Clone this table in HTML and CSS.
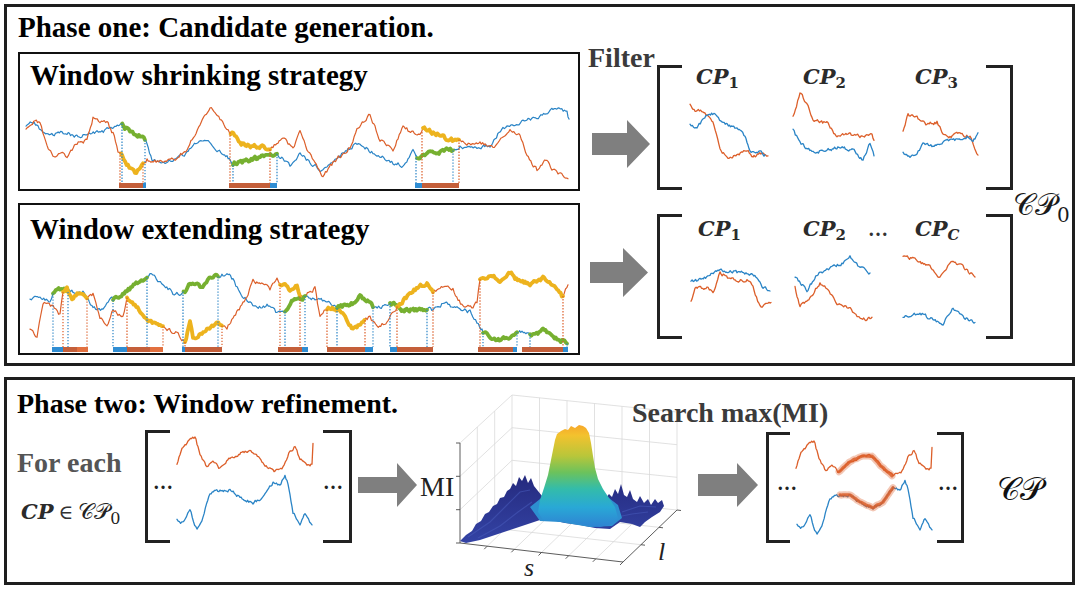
FILE: index.html
```html
<!DOCTYPE html>
<html lang="en">
<head>
<meta charset="utf-8">
<title>Candidate generation and window refinement</title>
<link rel="stylesheet" href="styles.css">
</head>
<body>
<div class="page">
  <section class="phase one">
    <div class="left-col">
      <h1 class="title">Phase one: Candidate generation.</h1>
      <div class="strat shrink">
        <h2 class="strat-title">Window shrinking strategy</h2>
        <svg id="shrink" class="chart" viewBox="20 95 558 94" width="558" height="94"></svg>
      </div>
      <div class="strat extend">
        <h2 class="strat-title">Window extending strategy</h2>
        <svg id="extend" class="chart" viewBox="20 248 558 105" width="558" height="105"></svg>
      </div>
    </div>
    <div class="arrow-col">
      <div class="filter">Filter</div>
      <svg class="arrow a1" viewBox="0 0 58 48" width="58" height="48"><path d="M0 13H35V0L58 24L35 48V35H0Z"/></svg>
      <svg class="arrow a2" viewBox="0 0 58 49" width="58" height="49"><path d="M0 14H33V0L58 24.5L33 49V35H0Z"/></svg>
    </div>
    <div class="bracket-col">
      <div class="bracket b1">
        <div class="bl"></div>
        <div class="bc">
          <div class="cp-row">
            <span class="cp k1">CP<sub>1</sub></span>
            <span class="cp k2">CP<sub>2</sub></span>
            <span class="cp k3">CP<sub>3</sub></span>
          </div>
          <svg id="mini1" class="chart" viewBox="682 89 304 96" width="304" height="96"></svg>
        </div>
        <div class="br"></div>
      </div>
      <div class="bracket b2">
        <div class="bl"></div>
        <div class="bc">
          <div class="cp-row">
            <span class="cp k1">CP<sub>1</sub></span>
            <span class="cp k2">CP<sub>2</sub></span>
            <span class="mid-dots">&hellip;</span>
            <span class="cp k3">CP<sub class="it">C</sub></span>
          </div>
          <svg id="mini2" class="chart" viewBox="682 241 304 95" width="304" height="95"></svg>
        </div>
        <div class="br"></div>
      </div>
    </div>
    <div class="cp0-col">
      <div class="cp0 scr">&#x1D49E;&#x1D4AB;<sub>0</sub></div>
    </div>
  </section>

  <section class="phase two">
    <h1 class="title t2">Phase two: Window refinement.</h1>
    <svg class="plot" viewBox="455 380 235 202" width="235" height="202">
      <defs>
        <linearGradient id="pk" gradientUnits="userSpaceOnUse" x1="0" y1="425" x2="0" y2="528">
          <stop offset="0" stop-color="#f7a72a"/>
          <stop offset="0.1" stop-color="#f3c22e"/>
          <stop offset="0.3" stop-color="#b9c63a"/>
          <stop offset="0.46" stop-color="#6cc25c"/>
          <stop offset="0.62" stop-color="#33bcaa"/>
          <stop offset="0.8" stop-color="#29a8d6"/>
          <stop offset="1" stop-color="#2f80d2"/>
        </linearGradient>
        <linearGradient id="bs" gradientUnits="userSpaceOnUse" x1="0" y1="475" x2="0" y2="545">
          <stop offset="0" stop-color="#252a7e"/>
          <stop offset="1" stop-color="#3444a6"/>
        </linearGradient>
      </defs>
      <g class="grid">
        <path d="M512 395V493M539.5 397.8V495.8M567 400.7V498.7M594.5 403.5V501.5M622 406.3V504.3M649.5 409.2V507.2M677 412V510"/>
        <path d="M512 395L677 412M512 427.7L677 444.7M512 460.3L677 477.3M512 493L677 510"/>
        <path d="M460 443L512 395M460 476.3L512 427.7M460 509.7L512 460.3M477.3 427V526.3M494.7 411V509.7"/>
        <path d="M477.3 526.3L641 544.7M494.7 509.7L659 527.3M487.2 546.2L539.5 495.8M514.3 549.3L567 498.7M541.5 552.5L594.5 501.5M568.7 555.7L622 504.3M595.8 558.8L649.5 507.2M460 543L512 493"/>
      </g>
      <g class="axes">
        <path d="M460 443V543L623 562L677 510"/>
        <path d="M460 443H456M460 476.3H456M460 509.7H456M460 543H456"/>
        <path d="M487.2 546.2l-3 3M514.3 549.3l-3 3M541.5 552.5l-3 3M568.7 555.7l-3 3M595.8 558.8l-3 3M623 562l-3 3"/>
        <path d="M641 544.7l4 .5M659 527.3l4 .5M677 510l4 .5"/>
      </g>
      <polygon fill="url(#bs)" points="460,541 466,535 472,531 476,524 481,521 485,514 489,512 493,506 497,504 500,498 504,497 507,491 510,489 513,483 516,486 519,477 522,481 525,475 528,483 531,478 534,486 538,491 542,496 560,499 590,497 605,499 609,494 612,497 615,489 618,494 621,484 624,495 627,497 630,490 633,499 637,502 640,496 644,503 648,499 651,505 655,499 658,503 662,500 664,506 660,512 652,517 645,522 640,527 632,524 620,522 610,529 595,528 580,525 565,523 552,520 540,520 525,525 510,530 495,535 480,540 466,543"/>
      <g class="streak">
        <path d="M468 537L490 522L506 506L520 492L530 490"/>
        <path d="M478 538L500 526L518 512L532 502"/>
        <path d="M622 512L640 506L656 507"/>
        <path d="M612 518L632 514L648 512"/>
      </g>
      <polygon fill="#2d8fd0" points="530,507 545,495 560,500 590,497 605,495 618,505 622,518 612,526 590,527 560,522 540,521"/>
      <polygon fill="url(#pk)" points="555,440 557,434 561,431 565,429 568,430 571,426 575,428 579,425 583,426 586,428 589,433 591,443 593,456 595,468 598,479 603,489 609,498 615,507 618,518 612,524 600,527 585,525 570,522 555,521 543,520 538,512 540,500 544,488 548,475 551,460 553,450"/>
      <text class="ax-lab" x="524" y="576">s</text>
      <text class="ax-lab" x="658" y="560">l</text>
    </svg>
    <div class="search">Search max(MI)</div>

    <div class="for">
      <div class="for-each">For each</div>
      <div class="cp-in"><span class="cpb">CP</span> <span class="in">&#8712;</span> <span class="scr">&#x1D49E;&#x1D4AB;<sub>0</sub></span></div>
    </div>
    <div class="bracket pb1">
      <div class="bl"><span class="dots">&hellip;</span></div>
      <svg id="p2a" class="chart" viewBox="170 430 153 113" width="153" height="113"></svg>
      <div class="br"><span class="dots">&hellip;</span></div>
    </div>
    <svg class="arrow a3" viewBox="0 0 59 44" width="59" height="44"><path d="M0 14H39V0L59 22L39 44V30H0Z"/></svg>
    <div class="mi">MI</div>
    <svg class="arrow a4" viewBox="0 0 60 44" width="60" height="44"><path d="M0 11H39V0L60 22L39 44V33H0Z"/></svg>
    <div class="bracket pb2">
      <div class="bl"><span class="dots">&hellip;</span></div>
      <svg id="p2b" class="chart" viewBox="790 432 147 111" width="147" height="111"></svg>
      <div class="br"><span class="dots">&hellip;</span></div>
    </div>
    <div class="cpf scr">&#x1D49E;&#x1D4AB;</div>
  </section>
</div>
<script src="script.js"></script>
</body>
</html>
```

FILE: styles.css
```css
* { box-sizing: border-box; margin: 0; padding: 0; }
html, body { background: #fff; }
body {
  width: 1080px;
  height: 591px;
  overflow: hidden;
  font-family: "Liberation Serif", "Times New Roman", serif;
  color: #000;
}
.page { padding: 4px 5px 0 4px; }
.phase { border: 3px solid #1e1e1e; background: #fff; }

/* ---------- phase one ---------- */
.one { height: 362px; display: flex; }
.left-col { width: 573px; padding-left: 11px; flex: none; }
.title { font-size: 28px; font-weight: bold; line-height: 32px; white-space: nowrap; }
.one .title { margin-top: 4px; font-size: 29px; }
.strat { width: 562px; border: 2px solid #111; }
.shrink { margin-top: 9px; }
.extend { margin-top: 12px; }
.strat-title { font-size: 29px; font-weight: bold; line-height: 32px; padding-left: 10px; white-space: nowrap; }
.shrink .strat-title { padding-top: 5px; }
.extend .strat-title { padding-top: 7.5px; }
.chart { display: block; overflow: visible; }
.shrink .chart { margin-top: 4px; }
.extend .chart { margin-top: 3.5px; }

.arrow-col { width: 77px; flex: none; }
.filter { font-size: 28px; font-weight: bold; line-height: 32px; color: #3b3b3b; margin-top: 34.5px; padding-left: 8px; }
.arrow { display: block; fill: #7f7f7f; }
.a1 { margin: 46.5px 0 0 12px; }
.a2 { margin: 80px 0 0 10px; }

.bracket-col { width: 356px; flex: none; }
.bracket { display: flex; }
.bl, .br { border: 3px solid #222; flex: none; display: flex; align-items: center; }
.bl { border-right: none; }
.br { border-left: none; }
.b1 { margin-top: 58px; height: 125px; }
.b2 { margin-top: 24px; height: 125px; }
.b1 .bl, .b2 .bl { width: 25px; }
.b1 .br, .b2 .br { width: 27px; }
.bc { width: 304px; }
.cp-row {
  display: flex;
  height: 24px;
  line-height: 24px;
  font-family: "DejaVu Serif", serif;
  font-size: 21px;
  font-weight: bold;
  font-style: italic;
  color: #2b2b2b;
  white-space: nowrap;
}
.b2 .cp-row { margin-top: 3px; }
.cp sub { font-size: 15px; line-height: 0; vertical-align: -4px; font-style: normal; }
.cp sub.it { font-style: italic; }
.k1 { margin-left: 14px; width: 107px; }
.k2 { width: 112px; }
.b2 .k1 { margin-left: 16px; width: 105px; }
.b2 .k2 { width: 65px; }
.mid-dots { width: 47px; font-family: "Liberation Serif", serif; font-style: normal; font-size: 20px; color: #333; }
.cp0-col { flex: 1; }
.scr { font-family: "DejaVu Serif", "DejaVu Sans", "Noto Sans", serif; font-weight: normal; font-style: normal; }
.cp0 { margin-top: 182.6px; font-size: 30px; line-height: 30px; white-space: nowrap; color: #1a1a1a; }
.cp0 sub { font-size: 20px; vertical-align: -7px; line-height: 0; }

/* ---------- phase two ---------- */
.two {
  height: 208px;
  margin-top: 11px;
  padding-left: 10px;
  display: grid;
  grid-template-columns: 128px 207px 66px 37px 235px 72px 204px 1fr;
  grid-template-rows: 50px 152px;
  align-items: start;
}
.t2 { grid-row: 1; grid-column: 1 / 5; margin-top: 8px; }
.plot { grid-row: 1 / 3; grid-column: 5; display: block; }
.plot .grid path { fill: none; stroke: #d9d9d9; stroke-width: 0.8; }
.plot .axes path { fill: none; stroke: #4a4a4a; stroke-width: 0.9; }
.plot .streak path { fill: none; stroke: #4658b8; stroke-width: 1.2; stroke-opacity: 0.6; }
.ax-lab { font-family: "Liberation Serif", serif; font-style: italic; font-size: 26px; fill: #222; }
.search {
  grid-row: 1;
  grid-column: 5 / 8;
  position: relative;
  margin-top: 16.5px;
  padding-left: 177px;
  font-size: 28px;
  font-weight: bold;
  line-height: 32px;
  color: #3b3b3b;
  white-space: nowrap;
}
.for { grid-row: 2; grid-column: 1; }
.for-each { font-size: 28px; font-weight: bold; line-height: 32px; color: #555; margin-top: 16.5px; white-space: nowrap; }
.cp-in { margin-top: 17px; padding-left: 4px; font-size: 20px; line-height: 32px; white-space: nowrap; color: #333; }
.cpb { font-family: "DejaVu Serif", serif; font-weight: bold; font-style: italic; font-size: 21px; color: #2b2b2b; }
.in { font-family: "DejaVu Serif", serif; font-size: 20px; }
.cp-in .scr { font-size: 22px; color: #222; }
.cp-in sub { font-size: 16px; vertical-align: -5px; line-height: 0; }

.pb1 { grid-row: 2; grid-column: 2; height: 113px; }
.pb1 .bl { width: 25px; padding-left: 5px; }
.pb1 .br { width: 29px; }
.pb2 { grid-row: 2; grid-column: 7; margin: 2px 0 0 4px; height: 111px; }
.pb2 .bl { width: 24px; padding-left: 8px; }
.pb2 .br { width: 27px; padding-left: 1px; }
.dots { font-family: "Liberation Serif", serif; font-weight: bold; font-size: 20px; line-height: 1; margin-top: -10px; color: #222; }
.a3 { grid-row: 2; grid-column: 3; margin: 33px 0 0 6px; }
.mi { grid-row: 2; grid-column: 4; margin: 43px 0 0 2px; font-size: 28px; line-height: 28px; color: #222; }
.a4 { grid-row: 2; grid-column: 6; margin: 33px 0 0 8px; }
.cpf { grid-row: 2; grid-column: 8; padding-left: 31px; margin-top: 43px; font-size: 32px; line-height: 32px; color: #111; white-space: nowrap; }
```

FILE: script.js
```js
(function () {
  var NS = 'http://www.w3.org/2000/svg';
  var COL = { b: '#2a84c6', o: '#dc5f2a', g: '#76b030', y: '#edb31e', B: '#2f8dd3', O: '#c45f3a', O2: '#e2703f' };

  function rng(seed) {
    var s = seed >>> 0;
    return function () { s = (Math.imul(s, 1664525) + 1013904223) >>> 0; return s / 4294967296; };
  }
  function walk(a, seed, amp, step) {
    var r = rng(seed), pts = [], n = 0;
    amp = amp || 3.4; step = step || 1.3;
    for (var i = 0; i < a.length - 1; i++) {
      var x0 = a[i][0], y0 = a[i][1], x1 = a[i + 1][0], y1 = a[i + 1][1];
      var k = Math.max(1, Math.round((x1 - x0) / step));
      for (var j = i ? 1 : 0; j <= k; j++) {
        var t = j / k;
        n = 0.5 * n + (r() - 0.5) * amp;
        pts.push([x0 + (x1 - x0) * t, y0 + (y1 - y0) * t + n]);
      }
    }
    return pts;
  }
  function pathD(p) {
    return p.map(function (q, i) { return (i ? 'L' : 'M') + q[0].toFixed(1) + ' ' + q[1].toFixed(1); }).join('');
  }
  function seg(p, a, b) { return p.filter(function (q) { return q[0] >= a - 0.01 && q[0] <= b + 0.01; }); }
  function yAt(p, x) {
    var best = p[0];
    p.forEach(function (q) { if (Math.abs(q[0] - x) < Math.abs(best[0] - x)) best = q; });
    return best[1];
  }
  function el(svg, tag, at) {
    var e = document.createElementNS(NS, tag);
    for (var k in at) e.setAttribute(k, at[k]);
    svg.appendChild(e);
    return e;
  }
  function line(svg, p, color, w, extra) {
    var at = { d: pathD(p), fill: 'none', stroke: color, 'stroke-width': w, 'stroke-linejoin': 'round', 'stroke-linecap': 'round' };
    if (extra) for (var k in extra) at[k] = extra[k];
    return el(svg, 'path', at);
  }

  function big(id, series, hls, bars, barY, barH) {
    var svg = document.getElementById(id), S = {};
    ['b', 'o'].forEach(function (k) { S[k] = walk(series[k][0], series[k][1], 3.6); });
    line(svg, S.b, COL.b, 1.2);
    line(svg, S.o, COL.o, 1.2);
    hls.forEach(function (h) { line(svg, seg(S[h[0]], h[1], h[2]), COL[h[3]], 3.8); });
    hls.forEach(function (h) {
      [h[1], h[2]].forEach(function (x) {
        el(svg, 'line', { x1: x, x2: x, y1: yAt(S[h[0]], x).toFixed(1), y2: barY, stroke: COL[h[0]], 'stroke-width': 1.2, 'stroke-dasharray': '1.4 1.6' });
      });
    });
    bars.forEach(function (b) { el(svg, 'rect', { x: b[0], y: barY, width: b[1] - b[0], height: barH, fill: COL[b[2]] }); });
  }

  function mini(id, list) {
    var svg = document.getElementById(id);
    list.forEach(function (s) { line(svg, walk(s[0], s[2], 3, 1.1), COL[s[1]], 1.3); });
  }

  /* ---- window shrinking strategy ---- */
  big('shrink', {
    b: [[[26,127],[33,122],[43,133],[53,135],[67,132],[73,137],[83,135],[97,133],[107,130],[121,125],[130,131],[145,139],[147,142],[152,160],[160,163],[173,160],[183,157],[192,145],[207,140],[217,150],[227,157],[233,163],[250,160],[265,157],[277,155],[283,158],[290,167],[300,152],[310,163],[323,170],[343,153],[357,143],[373,152],[393,163],[403,165],[413,152],[417,157],[435,152],[453,150],[460,147],[477,148],[490,145],[503,127],[523,122],[537,117],[553,108],[567,113],[569,120]], 11],
    o: [[[26,130],[35,120],[40,123],[47,147],[53,157],[60,152],[67,157],[77,143],[87,140],[93,118],[100,123],[107,123],[113,133],[118,152],[121,153],[128,165],[135,172],[143,165],[147,160],[160,162],[173,160],[187,150],[200,123],[210,107],[220,120],[228,130],[232,133],[240,143],[253,147],[270,147],[273,147],[283,137],[293,150],[300,133],[307,150],[323,177],[333,163],[350,147],[357,130],[370,115],[380,140],[393,150],[403,127],[413,133],[420,135],[423,127],[432,132],[440,135],[450,140],[460,142],[467,145],[480,143],[493,147],[510,130],[520,135],[527,157],[537,170],[547,160],[553,170],[563,177],[568,178]], 23]
  }, [
    ['b', 122, 145, 'g'], ['o', 120, 143, 'y'],
    ['o', 230, 270, 'y'], ['b', 233, 277, 'g'],
    ['b', 416, 453, 'g'], ['o', 422, 459, 'y']
  ], [
    [119, 143, 'O'], [143, 146, 'B'],
    [229, 270, 'O'], [270, 277, 'B'],
    [415, 422, 'B'], [422, 459, 'O']
  ], 183, 5);

  /* ---- window extending strategy ---- */
  big('extend', {
    b: [[[30,300],[40,298],[50,302],[53,293],[60,289],[68,290],[73,292],[83,293],[93,307],[103,310],[112,298],[113,300],[120,295],[127,290],[140,282],[147,277],[150,275],[163,283],[173,293],[182,293],[185,291],[190,283],[200,287],[213,277],[218,277],[227,273],[233,280],[240,293],[250,303],[257,308],[267,305],[277,313],[283,310],[285,312],[293,300],[300,297],[310,297],[320,300],[330,303],[337,307],[350,305],[360,297],[370,303],[373,308],[380,307],[390,302],[403,310],[417,310],[427,308],[433,310],[443,303],[457,308],[470,312],[477,322],[482,330],[483,332],[497,340],[510,337],[517,330],[527,333],[530,335],[543,330],[557,338],[567,343]], 37],
    o: [[[30,330],[37,338],[43,303],[53,307],[60,315],[63,292],[67,288],[72,300],[80,293],[87,300],[93,295],[100,317],[107,327],[113,310],[123,317],[127,297],[135,305],[147,320],[163,328],[167,330],[177,333],[183,340],[185,342],[190,323],[193,338],[207,330],[217,322],[227,328],[233,317],[243,303],[253,282],[263,283],[270,290],[277,277],[280,282],[290,290],[297,283],[300,297],[310,293],[315,288],[320,317],[327,308],[340,310],[353,330],[363,320],[370,317],[377,328],[387,322],[397,307],[410,293],[427,283],[433,293],[440,287],[453,290],[463,307],[473,307],[477,303],[480,280],[490,275],[500,280],[510,273],[520,282],[530,283],[543,278],[557,287],[563,297],[568,283]], 53]
  }, [
    ['b', 53, 68, 'g'], ['o', 63, 87, 'y'],
    ['b', 113, 147, 'g'], ['o', 127, 163, 'y'],
    ['b', 183, 218, 'g'], ['o', 185, 222, 'y'],
    ['o', 280, 300, 'y'], ['b', 285, 305, 'g'],
    ['o', 327, 365, 'y'], ['b', 337, 373, 'g'],
    ['b', 390, 427, 'g'], ['o', 397, 433, 'y'],
    ['o', 480, 563, 'y'], ['b', 483, 517, 'g'], ['b', 530, 567, 'g']
  ], [
    [52, 63, 'B'], [63, 77, 'O'], [77, 88, 'O2'],
    [113, 127, 'B'], [127, 150, 'O'], [150, 163, 'O2'],
    [182, 185, 'B'], [185, 222, 'O'],
    [278, 302, 'O'], [302, 308, 'B'],
    [327, 365, 'O'], [365, 373, 'B'],
    [390, 397, 'B'], [397, 433, 'O'],
    [478, 513, 'O'], [513, 517, 'B'],
    [522, 563, 'O'], [563, 568, 'B']
  ], 347, 5);

  /* ---- filtered candidate pairs ---- */
  mini('mini1', [
    [[[690,105],[695,110],[705,112],[713,123],[720,147],[728,160],[737,155],[747,150],[753,157],[762,153],[768,157]], 'o', 3],
    [[[690,125],[697,128],[707,115],[715,113],[723,123],[737,128],[745,137],[750,153],[760,152],[765,155]], 'b', 5],
    [[[793,117],[800,93],[808,105],[813,120],[827,123],[837,137],[847,133],[860,137],[872,133],[874,140]], 'o', 7],
    [[[793,130],[800,143],[813,153],[827,150],[840,147],[853,150],[863,160],[870,143],[874,155]], 'b', 9],
    [[[903,132],[908,115],[917,117],[927,125],[937,122],[942,132],[950,137],[960,133],[970,137],[978,155]], 'o', 13],
    [[[903,153],[910,157],[917,155],[923,143],[933,147],[943,142],[957,140],[967,137],[973,143],[978,132]], 'b', 17]
  ]);
  mini('mini2', [
    [[[691,282],[700,280],[720,270],[737,272],[747,273],[757,277],[762,287],[770,290]], 'b', 19],
    [[[691,302],[695,287],[707,288],[713,293],[720,273],[733,280],[747,280],[753,287],[760,307],[767,303],[771,302]], 'o', 29],
    [[[795,278],[807,290],[818,273],[833,267],[843,263],[850,257],[860,267],[870,273]], 'b', 31],
    [[[795,287],[800,307],[810,297],[820,283],[828,290],[837,303],[847,307],[857,315],[867,320],[872,317]], 'o', 41],
    [[[903,257],[917,260],[930,267],[940,278],[950,262],[963,267],[975,277]], 'o', 43],
    [[[903,318],[920,313],[933,320],[943,323],[952,308],[963,317],[975,323]], 'b', 47]
  ]);

  /* ---- phase two ---- */
  var p2o = [[177,465],[182,447],[187,442],[195,438],[200,453],[207,467],[213,463],[220,468],[230,458],[243,452],[253,452],[263,463],[273,472],[283,467],[290,450],[295,447],[300,460],[307,465],[312,465],[313,445]];
  var p2b = [[177,520],[183,523],[190,510],[197,530],[203,517],[210,493],[220,490],[230,490],[240,497],[253,503],[263,497],[273,483],[280,485],[285,475],[288,483],[293,513],[300,523],[305,513],[312,525]];
  mini('p2a', [[p2o, 'o', 59], [p2b, 'b', 61]]);

  function shift(a, dx, dy) { return a.map(function (p) { return [p[0] + dx, p[1] + dy]; }); }
  var svgB = document.getElementById('p2b');
  var ro = shift(p2o, 619, 4), rb = shift(p2b, 620, 5);
  line(svgB, walk(ro, 59, 3, 1.1), COL.o, 1.3);
  line(svgB, walk(rb, 61, 3, 1.1), COL.b, 1.3);
  [[ro, 838, 895], [rb, 840, 893]].forEach(function (g, i) {
    var smooth = walk(seg(g[0], g[1] - 3, g[2] + 3), 71 + i, 0.8, 1.5);
    line(svgB, smooth, COL.o, 7, { 'stroke-opacity': 0.35 });
    line(svgB, smooth, COL.o, 3.2, { 'stroke-opacity': 0.85 });
  });
})();
```
